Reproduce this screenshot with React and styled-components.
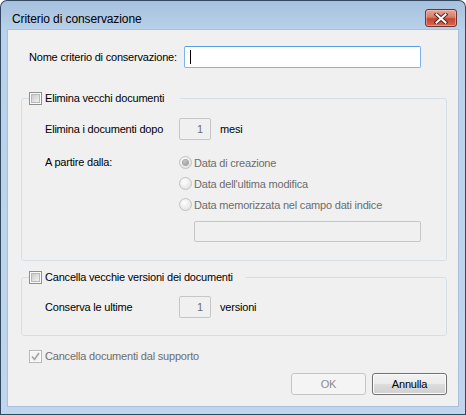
import React from 'react'
import styled, { createGlobalStyle } from 'styled-components'

const GlobalStyle = createGlobalStyle`
  html, body {
    margin: 0;
    padding: 0;
    background: #ffffff;
  }
  body {
    font-family: "Liberation Sans", Arial, sans-serif;
    font-size: 11px;
    letter-spacing: -0.2px;
    color: #000;
  }
`

const Window = styled.div`
  width: 466px;
  height: 415px;
  box-sizing: border-box;
  border: 1px solid #34495f;
  border-bottom-color: #1f5160;
  border-radius: 7px 7px 0 0;
  background: linear-gradient(#a6c1de, #b9d1ea 29px, #bfd6ee);
  display: flex;
  flex-direction: column;
  overflow: hidden;
`

const TitleBar = styled.div`
  height: 29px;
  flex: none;
  display: flex;
  align-items: flex-start;
  justify-content: space-between;
  padding: 0 8px 0 11px;
`

const Title = styled.span`
  margin-top: 11px;
  font-size: 12px;
  line-height: 14px;
  letter-spacing: -0.1px;
  color: #000;
`

const CloseButton = styled.div`
  margin-top: 8px;
  width: 32px;
  height: 18px;
  box-sizing: border-box;
  border: 1px solid #6d3232;
  border-radius: 3px;
  background: linear-gradient(#e8a597, #d87c68 45%, #c6452f 55%, #d56a4f);
  box-shadow: inset 0 0 0 1px rgba(255, 210, 200, 0.45);
  display: flex;
  align-items: center;
  justify-content: center;
`

const Client = styled.div`
  flex: 1;
  margin: 0 7px 8px 7px;
  background: #f0f0f0;
  box-shadow: 0 0 0 1px #a9c0d9;
  padding: 16px 11px 0 13px;
  display: flex;
  flex-direction: column;
`

const NameRow = styled.div`
  display: grid;
  grid-template-columns: 155px 237px;
  align-items: center;
  padding-left: 8px;
`

const TextInput = styled.div`
  height: 22px;
  box-sizing: border-box;
  border: 1px solid #7eb4ea;
  border-top-color: #569de5;
  border-radius: 2px;
  background: #fff;
  display: flex;
  align-items: center;
  padding-left: 5px;
`

const Caret = styled.span`
  width: 1px;
  height: 14px;
  background: #000;
`

const GroupBox = styled.fieldset`
  margin: ${p => p.$top}px 0 0 0;
  width: 426px;
  box-sizing: border-box;
  padding: 0 0 0 7px;
  border: 1px solid #d5dfe5;
  border-radius: 3px;
  min-width: 0;
`

const Legend = styled.legend`
  padding: 0 ${p => p.$gap}px 0 0;
  height: 13px;
  line-height: 13px;
  display: flex;
  align-items: center;
  gap: 3px;
`

const GroupBody = styled.div`
  padding: ${p => p.$top}px 0 ${p => p.$bottom}px 16px;
  display: flex;
  flex-direction: column;
  gap: 12px;
`

const Row = styled.div`
  display: grid;
  grid-template-columns: 134px auto;
  align-items: ${p => (p.$start ? 'start' : 'center')};
`

const Label = styled.span`
  line-height: ${p => p.$lh || 13}px;
  white-space: nowrap;
`

const Inline = styled.div`
  display: flex;
  align-items: center;
  gap: 9px;
`

const SpinBox = styled.div`
  width: 32px;
  height: 22px;
  box-sizing: border-box;
  border: 1px solid #c6c6c6;
  border-radius: 2px;
  background: #f0f0f0;
  color: #6d6d6d;
  text-align: right;
  padding-right: 7px;
  line-height: 20px;
`

const RadioList = styled.div`
  display: flex;
  flex-direction: column;
`

const RadioRow = styled.div`
  height: 21px;
  display: flex;
  align-items: center;
  gap: 2px;
  color: #6d6d6d;
`

const RadioDot = styled.span`
  width: 13px;
  height: 13px;
  box-sizing: border-box;
  border-radius: 50%;
  border: 1px solid #c2c2c2;
  background: radial-gradient(circle at 40% 35%, #ffffff, #e6e6e6 70%, #dcdcdc);
  display: flex;
  align-items: center;
  justify-content: center;

  &::after {
    content: '';
    display: ${p => (p.$checked ? 'block' : 'none')};
    width: 5px;
    height: 5px;
    border-radius: 50%;
    background: radial-gradient(circle at 40% 35%, #c8c8c8, #8d8d8d);
    box-shadow: 0 0 0 1px #a8a8a8;
  }
`

const WideField = styled.div`
  margin: 6px 0 0 15px;
  width: 227px;
  height: 21px;
  box-sizing: border-box;
  border: 1px solid #c6c6c6;
  border-radius: 2px;
  background: #f0f0f0;
`

const CheckRow = styled.div`
  display: flex;
  align-items: center;
  gap: 3px;
  color: ${p => (p.$disabled ? '#6d6d6d' : '#000')};
  padding-left: ${p => p.$indent || 0}px;
  margin-top: ${p => p.$top || 0}px;
  height: 13px;
  line-height: 13px;
`

const Box = styled.span`
  width: 13px;
  height: 13px;
  box-sizing: border-box;
  flex: none;
  border: 1px solid ${p => (p.$disabled ? '#b7b7b7' : '#8e8f8f')};
  background: #f4f4f4;
  box-shadow: inset 0 0 0 1px #fafafa;
  display: flex;
  align-items: center;
  justify-content: center;

  &::before {
    content: '';
    display: ${p => (p.$disabled ? 'none' : 'block')};
    width: 7px;
    height: 7px;
    border: 1px solid #b9b9b9;
    background: linear-gradient(135deg, #cbcbcb, #f2f2f2);
  }
`

const ButtonRow = styled.div`
  margin-top: 10px;
  display: flex;
  justify-content: flex-end;
  gap: 6px;
`

const Button = styled.div`
  width: 75px;
  height: 22px;
  box-sizing: border-box;
  border: 1px solid ${p => (p.$disabled ? '#c5c5c5' : '#707070')};
  border-radius: 3px;
  background: ${p =>
    p.$disabled
      ? '#f4f4f4'
      : 'linear-gradient(#f2f2f2, #ebebeb 50%, #dddddd 50%, #cfcfcf)'};
  box-shadow: ${p => (p.$disabled ? 'none' : 'inset 0 0 0 1px #fcfcfc')};
  color: ${p => (p.$disabled ? '#8d8d8d' : '#000')};
  text-align: center;
  line-height: 20px;
`

const CloseGlyph = () => (
  <svg width="14" height="11" viewBox="0 0 14 11">
    <path d="M2.5 1.5 L11.5 9.5 M11.5 1.5 L2.5 9.5" stroke="#5a2323" strokeWidth="4" strokeLinecap="square" />
    <path d="M2.5 1.5 L11.5 9.5 M11.5 1.5 L2.5 9.5" stroke="#ffffff" strokeWidth="2" strokeLinecap="square" />
  </svg>
)

const Tick = () => (
  <svg width="9" height="9" viewBox="0 0 9 9">
    <path d="M1 4.5 L3.5 7.5 L8 1" fill="none" stroke="#a3a3a3" strokeWidth="1.6" />
  </svg>
)

const radios = [
  { label: 'Data di creazione', checked: true },
  { label: "Data dell'ultima modifica", checked: false },
  { label: 'Data memorizzata nel campo dati indice', checked: false }
]

export default function App() {
  return (
    <>
      <GlobalStyle />
      <Window>
        <TitleBar>
          <Title>Criterio di conservazione</Title>
          <CloseButton>
            <CloseGlyph />
          </CloseButton>
        </TitleBar>
        <Client>
          <NameRow>
            <Label>Nome criterio di conservazione:</Label>
            <TextInput>
              <Caret />
            </TextInput>
          </NameRow>

          <GroupBox $top={24}>
            <Legend $gap={16}>
              <Box />
              <span>Elimina vecchi documenti</span>
            </Legend>
            <GroupBody $top={13} $bottom={18}>
              <Row>
                <Label>Elimina i documenti dopo</Label>
                <Inline>
                  <SpinBox>1</SpinBox>
                  <span>mesi</span>
                </Inline>
              </Row>
              <Row $start>
                <Label $lh={21}>A partire dalla:</Label>
                <RadioList>
                  {radios.map(r => (
                    <RadioRow key={r.label}>
                      <RadioDot $checked={r.checked} />
                      <span>{r.label}</span>
                    </RadioRow>
                  ))}
                  <WideField />
                </RadioList>
              </Row>
            </GroupBody>
          </GroupBox>

          <GroupBox $top={10}>
            <Legend $gap={12}>
              <Box />
              <span>Cancella vecchie versioni dei documenti</span>
            </Legend>
            <GroupBody $top={12} $bottom={17}>
              <Row>
                <Label>Conserva le ultime</Label>
                <Inline>
                  <SpinBox>1</SpinBox>
                  <span>versioni</span>
                </Inline>
              </Row>
            </GroupBody>
          </GroupBox>

          <CheckRow $disabled $indent={8} $top={14}>
            <Box $disabled>
              <Tick />
            </Box>
            <span>Cancella documenti dal supporto</span>
          </CheckRow>

          <ButtonRow>
            <Button $disabled>OK</Button>
            <Button>Annulla</Button>
          </ButtonRow>
        </Client>
      </Window>
    </>
  )
}
